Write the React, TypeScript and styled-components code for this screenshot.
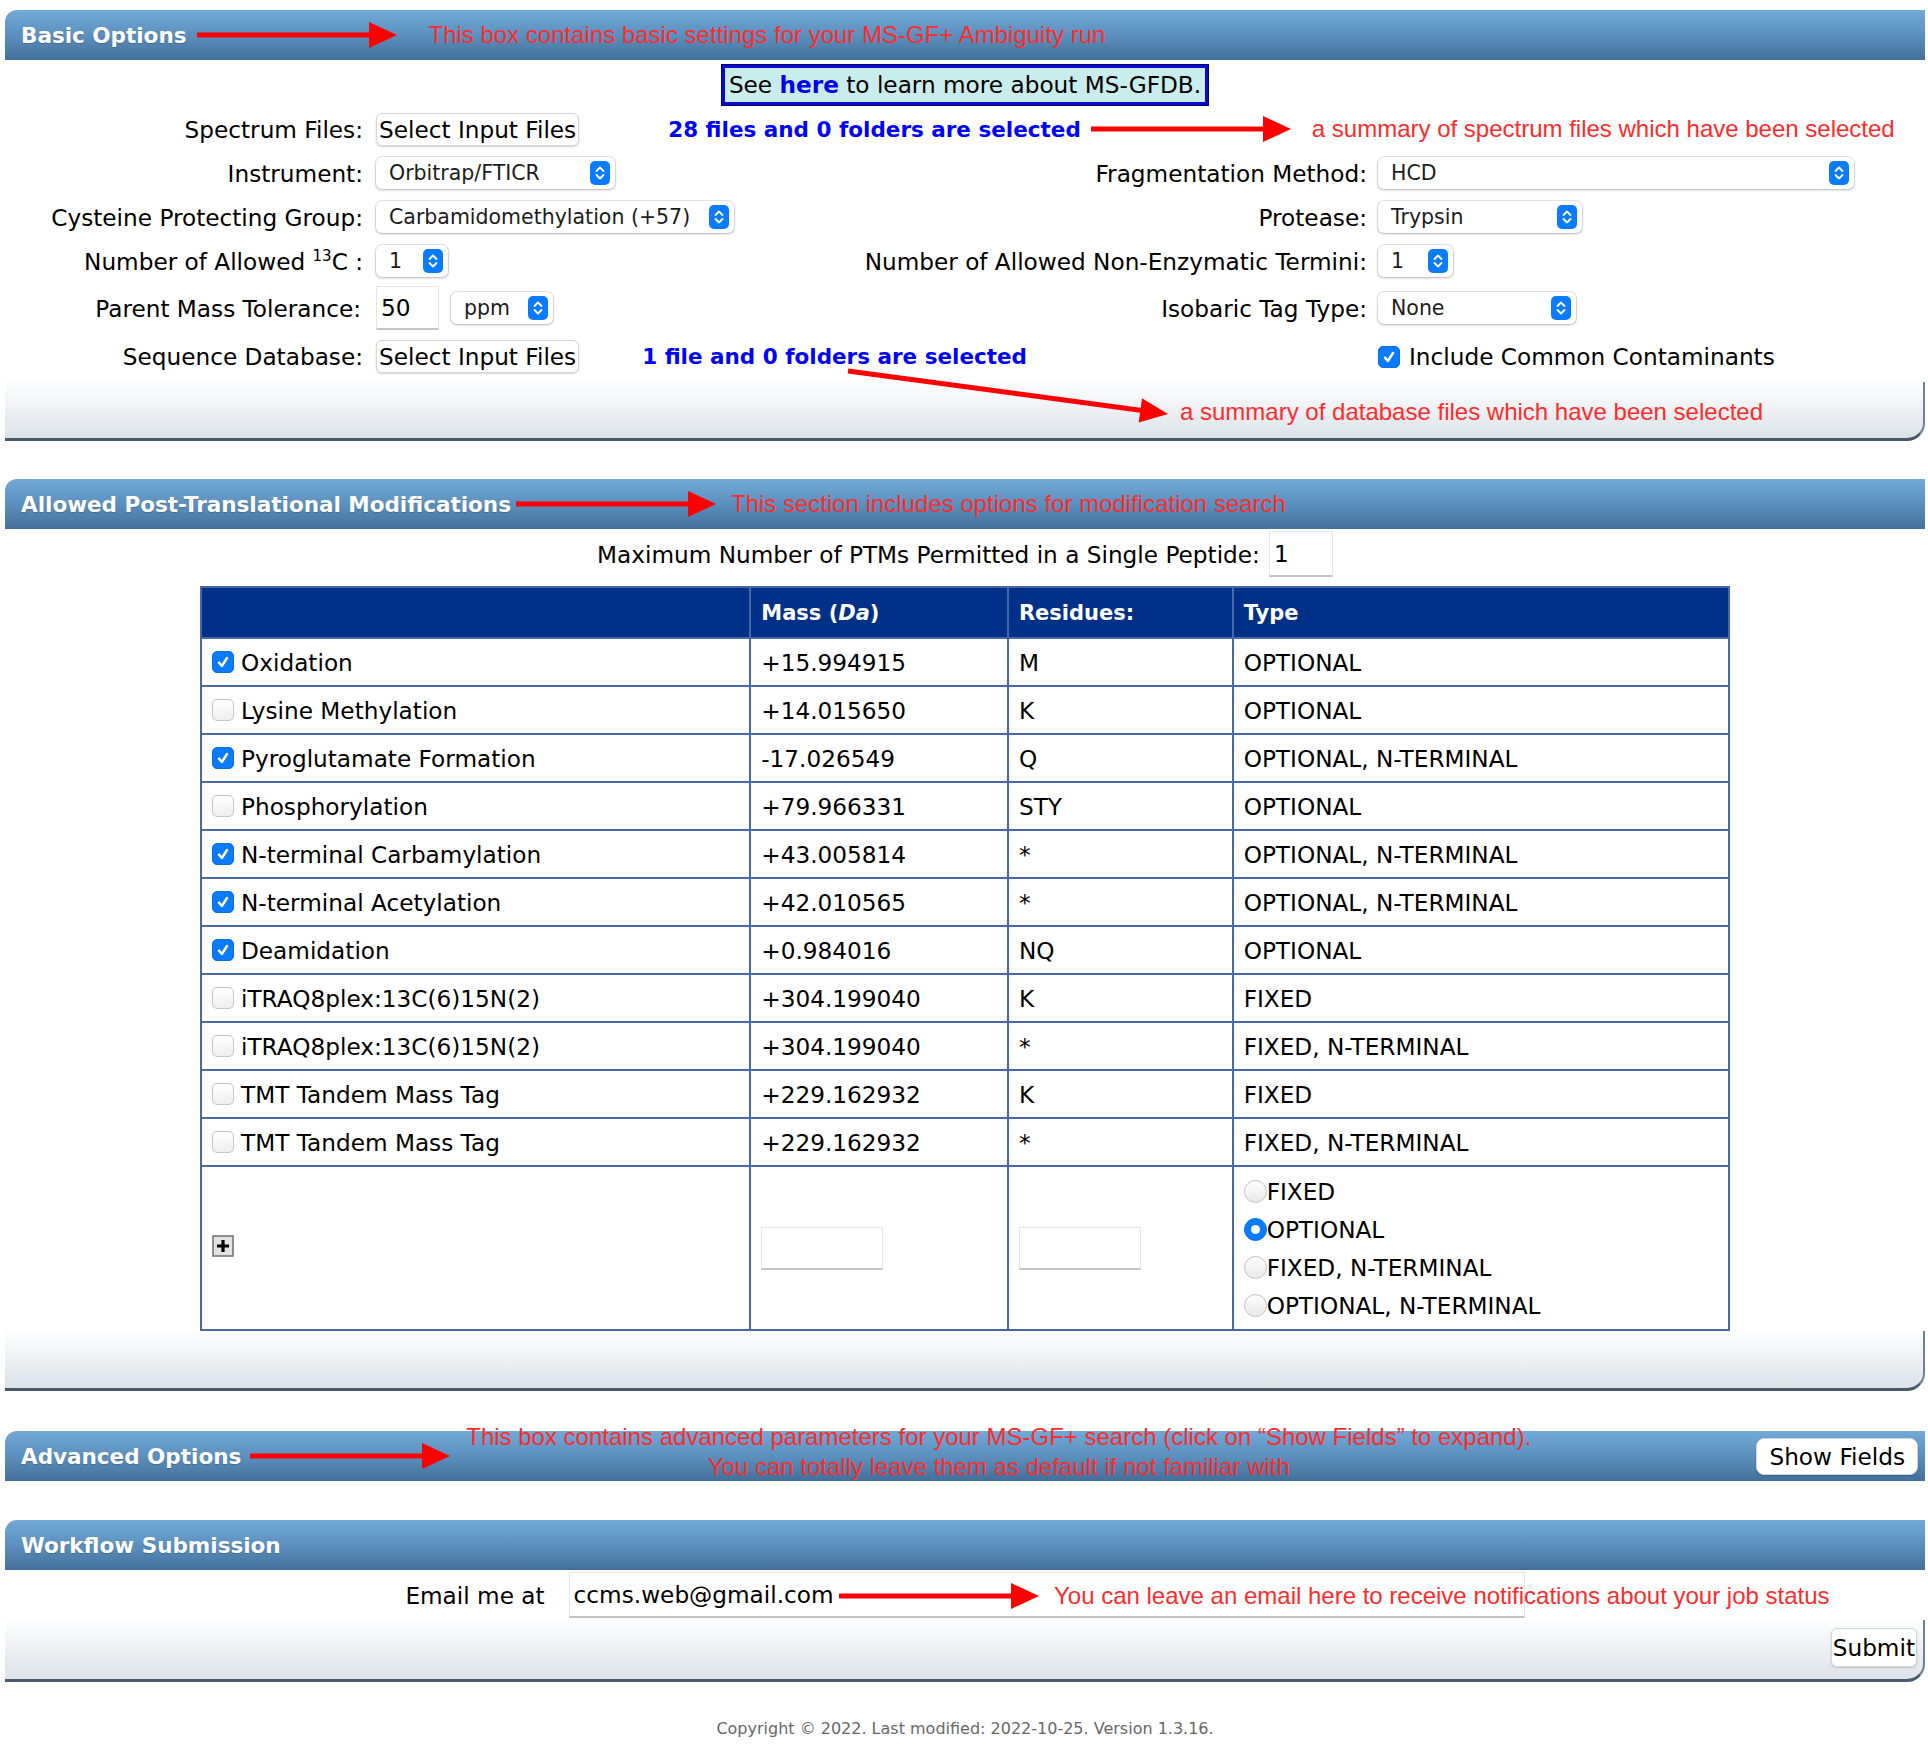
import React from "react";
import styled, { createGlobalStyle } from "styled-components";

const GlobalStyle = createGlobalStyle`
  html, body { margin: 0; padding: 0; background: #fff; }
  body {
    font-family: "DejaVu Sans", Verdana, sans-serif;
    font-size: 23.2px;
    color: #000;
  }
  * { box-sizing: border-box; }
`;

const Page = styled.div`
  padding: 10px 3px 30px 5px;
`;

const Section = styled.section<{ $mb: number }>`
  position: relative;
  margin-bottom: ${(p) => p.$mb}px;
`;

const Header = styled.div`
  display: flex;
  align-items: center;
  height: 50px;
  padding: 0 7px 0 16px;
  border-top-left-radius: 12px;
  background: linear-gradient(to bottom, #72a9d6 0%, #5e93c1 45%, #43709a 100%);
  color: #fff;
`;

const HeaderTitle = styled.h2`
  margin: 0;
  font-family: "DejaVu Sans", Verdana, sans-serif;
  font-size: 21.5px;
  font-weight: bold;
  color: #fff;
  white-space: nowrap;
  text-shadow: 0 1px 1px rgba(0, 0, 0, 0.2);
`;

const Note = styled.span`
  font-family: "Liberation Sans", Arial, sans-serif;
  font-size: 24px;
  line-height: 28px;
  color: #ff2b2b;
  white-space: nowrap;
`;

const CenterNote = styled.div`
  align-self: flex-start;
  margin-top: -9px;
  font-family: "Liberation Sans", Arial, sans-serif;
  font-size: 24px;
  line-height: 30px;
  color: #ff2b2b;
  text-align: center;
  white-space: nowrap;
`;

const ArrowSvg = styled.svg<{ $ml: number; $mr: number }>`
  display: block;
  flex: none;
  margin-left: ${(p) => p.$ml}px;
  margin-right: ${(p) => p.$mr}px;
`;

function Arrow({ ml = 0, mr = 0 }: { ml?: number; mr?: number }) {
  return (
    <ArrowSvg $ml={ml} $mr={mr} width="200" height="30" viewBox="0 0 200 30">
      <line x1="0" y1="15" x2="178" y2="15" stroke="#ff0000" strokeWidth="5" />
      <polygon points="172,2 200,15 172,28" fill="#ff0000" />
    </ArrowSvg>
  );
}

const Overlay = styled.div<{ $left: number; $top: number }>`
  position: absolute;
  left: ${(p) => p.$left}px;
  top: ${(p) => p.$top}px;
  pointer-events: none;
`;

const Footer = styled.div<{ $h: number; $mt?: number }>`
  height: ${(p) => p.$h}px;
  margin-top: ${(p) => p.$mt ?? 0}px;
  display: flex;
  justify-content: flex-end;
  align-items: flex-start;
  padding: 8px 6px 0 0;
  background: linear-gradient(to bottom, #fdfdfe 0%, #eef1f4 50%, #dbe2e9 100%);
  border-right: 2px solid #6f8294;
  border-bottom: 3px solid #47596b;
  border-bottom-right-radius: 18px;
`;

const InfoBox = styled.div`
  width: fit-content;
  margin: 5px auto 2px;
  padding: 2px 4px;
  line-height: 30px;
  background: #c9ecec;
  border: 3px solid #0a0ad2;
  box-shadow: 0 0 0 1px #00006e;
`;

const InfoLink = styled.a`
  color: #0000ee;
  font-weight: bold;
  text-decoration: none;
`;

const FormGrid = styled.div`
  display: grid;
  grid-template-columns: 371px 480px 522px 1fr;
  grid-template-rows: repeat(4, 44px) 50px 47px;
  align-items: center;
`;

const Label = styled.label<{ $pr: number }>`
  text-align: right;
  padding-right: ${(p) => p.$pr}px;
  white-space: nowrap;
`;

const Sup = styled.sup`
  font-size: 15px;
  vertical-align: 9px;
  line-height: 0;
`;

const Controls = styled.div<{ $span?: string }>`
  display: flex;
  align-items: center;
  white-space: nowrap;
  grid-column: ${(p) => p.$span ?? "auto"};
`;

const PlainButton = styled.button<{ $h: number; $px: number; $r: number; $push?: boolean }>`
  font-family: "DejaVu Sans", Verdana, sans-serif;
  font-size: 23.2px;
  color: #000;
  background: #fff;
  height: ${(p) => p.$h}px;
  padding: 0 ${(p) => p.$px}px;
  margin-left: ${(p) => (p.$push ? "auto" : "0")};
  border: 1px solid #d6d6d6;
  border-radius: ${(p) => p.$r}px;
  box-shadow: 0 1px 2px rgba(0, 0, 0, 0.18);
  white-space: nowrap;
  flex: none;
  cursor: pointer;
`;

const Summary = styled.span<{ $ml: number; $mr?: number }>`
  margin-left: ${(p) => p.$ml}px;
  margin-right: ${(p) => p.$mr ?? 0}px;
  color: #0000ff;
  font-weight: bold;
  font-size: 21.5px;
`;

const SelectBox = styled.div<{ $w: number; $ml?: number }>`
  display: inline-flex;
  align-items: center;
  justify-content: space-between;
  width: ${(p) => p.$w}px;
  height: 32px;
  margin-left: ${(p) => p.$ml ?? 0}px;
  padding: 0 5px 0 13px;
  background: #fff;
  border-radius: 6px;
  box-shadow: 0 0 0 1px rgba(0, 0, 0, 0.09), 0 1px 3px rgba(0, 0, 0, 0.22);
  font-size: 20.5px;
  color: #1c1c1c;
  white-space: nowrap;
  flex: none;
`;

function Select({ value, w, ml }: { value: string; w: number; ml?: number }) {
  return (
    <SelectBox $w={w} $ml={ml} role="combobox">
      <span>{value}</span>
      <svg width="20" height="24" viewBox="0 0 20 24">
        <rect x="0" y="0" width="20" height="24" rx="5" fill="#0b7bff" />
        <path d="M6.5 10 L10 6.5 L13.5 10" fill="none" stroke="#fff" strokeWidth="1.8" strokeLinecap="round" strokeLinejoin="round" />
        <path d="M6.5 14 L10 17.5 L13.5 14" fill="none" stroke="#fff" strokeWidth="1.8" strokeLinecap="round" strokeLinejoin="round" />
      </svg>
    </SelectBox>
  );
}

const TextField = styled.input<{ $w: number; $h: number }>`
  width: ${(p) => p.$w}px;
  height: ${(p) => p.$h}px;
  padding: 0 4px;
  font-family: "DejaVu Sans", Verdana, sans-serif;
  font-size: 23.2px;
  color: #000;
  background: #fff;
  border: 1px solid #e6e6e6;
  border-bottom: 2px solid #c4c4c4;
  outline: none;
  flex: none;
`;

const CheckBoxBox = styled.span<{ $checked: boolean }>`
  display: inline-flex;
  align-items: center;
  justify-content: center;
  flex: none;
  width: 22px;
  height: 22px;
  border-radius: 5px;
  background: ${(p) => (p.$checked ? "#0b7bff" : "linear-gradient(#ffffff, #efefef)")};
  border: 1px solid ${(p) => (p.$checked ? "#0a6fe6" : "#c6c6c6")};
`;

function CheckBox({ checked }: { checked: boolean }) {
  return (
    <CheckBoxBox $checked={checked} role="checkbox" aria-checked={checked}>
      {checked && (
        <svg width="16" height="16" viewBox="0 0 16 16">
          <path d="M4 8.6 L6.9 12 L12 4" fill="none" stroke="#fff" strokeWidth="2.4" strokeLinecap="round" strokeLinejoin="round" />
        </svg>
      )}
    </CheckBoxBox>
  );
}

const CheckLabel = styled.span`
  display: flex;
  align-items: center;
  gap: 9px;
  white-space: nowrap;
`;

const CenterRow = styled.div<{ $gap: number; $mt: number; $h: number }>`
  display: flex;
  justify-content: center;
  align-items: center;
  gap: ${(p) => p.$gap}px;
  margin-top: ${(p) => p.$mt}px;
  height: ${(p) => p.$h}px;
  white-space: nowrap;
`;

const PtmTable = styled.table`
  width: 1530px;
  margin: 9px auto 0;
  border-collapse: collapse;
  border: 2px solid #4767a5;
`;

const Th = styled.th<{ $w: number }>`
  width: ${(p) => p.$w}px;
  height: 51px;
  padding: 0 10px;
  background: #003087;
  color: #fff;
  font-size: 21px;
  font-weight: bold;
  text-align: left;
  border: 2px solid #4767a5;
`;

const Td = styled.td<{ $h?: number }>`
  height: ${(p) => p.$h ?? 48}px;
  padding: 0 10px;
  vertical-align: middle;
  border: 2px solid #4767a5;
  white-space: nowrap;
`;

const NameCell = styled.div`
  display: flex;
  align-items: center;
  gap: 7px;
`;

const RadioList = styled.div`
  display: flex;
  flex-direction: column;
`;

const RadioItem = styled.label`
  display: flex;
  align-items: center;
  height: 38px;
`;

const RadioDot = styled.span<{ $on: boolean }>`
  display: inline-flex;
  align-items: center;
  justify-content: center;
  flex: none;
  width: 23px;
  height: 23px;
  border-radius: 50%;
  background: ${(p) => (p.$on ? "#0b7bff" : "linear-gradient(#fdfdfd, #eaeaea)")};
  border: 1px solid ${(p) => (p.$on ? "#0a6fe6" : "#c3c3c3")};
  &::after {
    content: "";
    display: ${(p) => (p.$on ? "block" : "none")};
    width: 9px;
    height: 9px;
    border-radius: 50%;
    background: #fff;
  }
`;

const Copyright = styled.div`
  margin-top: 37px;
  text-align: center;
  font-size: 16px;
  line-height: 20px;
  color: #676767;
`;

const mods: { name: string; mass: string; res: string; type: string; on: boolean }[] = [
  { name: "Oxidation", mass: "+15.994915", res: "M", type: "OPTIONAL", on: true },
  { name: "Lysine Methylation", mass: "+14.015650", res: "K", type: "OPTIONAL", on: false },
  { name: "Pyroglutamate Formation", mass: "-17.026549", res: "Q", type: "OPTIONAL, N-TERMINAL", on: true },
  { name: "Phosphorylation", mass: "+79.966331", res: "STY", type: "OPTIONAL", on: false },
  { name: "N-terminal Carbamylation", mass: "+43.005814", res: "*", type: "OPTIONAL, N-TERMINAL", on: true },
  { name: "N-terminal Acetylation", mass: "+42.010565", res: "*", type: "OPTIONAL, N-TERMINAL", on: true },
  { name: "Deamidation", mass: "+0.984016", res: "NQ", type: "OPTIONAL", on: true },
  { name: "iTRAQ8plex:13C(6)15N(2)", mass: "+304.199040", res: "K", type: "FIXED", on: false },
  { name: "iTRAQ8plex:13C(6)15N(2)", mass: "+304.199040", res: "*", type: "FIXED, N-TERMINAL", on: false },
  { name: "TMT Tandem Mass Tag", mass: "+229.162932", res: "K", type: "FIXED", on: false },
  { name: "TMT Tandem Mass Tag", mass: "+229.162932", res: "*", type: "FIXED, N-TERMINAL", on: false },
];

const radioTypes = ["FIXED", "OPTIONAL", "FIXED, N-TERMINAL", "OPTIONAL, N-TERMINAL"];

function PlusIcon() {
  return (
    <svg width="22" height="22" viewBox="0 0 22 22" aria-label="add">
      <rect x="1" y="1" width="20" height="20" fill="#e2e2e2" stroke="#6e6e6e" strokeWidth="1.5" />
      <path d="M5 11 H17 M11 5 V17" stroke="#000" strokeWidth="3.2" />
    </svg>
  );
}

export default function App() {
  return (
    <Page>
      <GlobalStyle />

      <Section $mb={38}>
        <Header>
          <HeaderTitle>Basic Options</HeaderTitle>
          <Arrow ml={11} mr={31} />
          <Note>This box contains basic settings for your MS-GF+ Ambiguity run</Note>
        </Header>

        <InfoBox>
          See <InfoLink href="#">here</InfoLink> to learn more about MS-GFDB.
        </InfoBox>

        <FormGrid>
          <Label $pr={13}>Spectrum Files:</Label>
          <Controls $span="2 / -1">
            <PlainButton $h={33} $px={2} $r={6}>Select Input Files</PlainButton>
            <Summary $ml={89} $mr={10}>28 files and 0 folders are selected</Summary>
            <Arrow mr={21} />
            <Note>a summary of spectrum files which have been selected</Note>
          </Controls>

          <Label $pr={13}>Instrument:</Label>
          <Controls>
            <Select value="Orbitrap/FTICR" w={239} />
          </Controls>
          <Label $pr={11}>Fragmentation Method:</Label>
          <Controls>
            <Select value="HCD" w={476} />
          </Controls>

          <Label $pr={13}>Cysteine Protecting Group:</Label>
          <Controls>
            <Select value="Carbamidomethylation (+57)" w={358} />
          </Controls>
          <Label $pr={11}>Protease:</Label>
          <Controls>
            <Select value="Trypsin" w={204} />
          </Controls>

          <Label $pr={13}>
            Number of Allowed <Sup>13</Sup>C :
          </Label>
          <Controls>
            <Select value="1" w={72} />
          </Controls>
          <Label $pr={11}>Number of Allowed Non-Enzymatic Termini:</Label>
          <Controls>
            <Select value="1" w={75} />
          </Controls>

          <Label $pr={15}>Parent Mass Tolerance:</Label>
          <Controls>
            <TextField $w={63} $h={44} defaultValue="50" />
            <Select value="ppm" w={102} ml={12} />
          </Controls>
          <Label $pr={11}>Isobaric Tag Type:</Label>
          <Controls>
            <Select value="None" w={198} />
          </Controls>

          <Label $pr={13}>Sequence Database:</Label>
          <Controls $span="2 / 4">
            <PlainButton $h={33} $px={2} $r={6}>Select Input Files</PlainButton>
            <Summary $ml={63}>1 file and 0 folders are selected</Summary>
          </Controls>
          <Controls>
            <CheckLabel>
              <CheckBox checked />
              Include Common Contaminants
            </CheckLabel>
          </Controls>
        </FormGrid>

        <Footer $h={59} $mt={2} />

        <Overlay $left={841} $top={353}>
          <svg width="330" height="64" viewBox="0 0 330 64">
            <line x1="2" y1="8" x2="296" y2="47.5" stroke="#ff0000" strokeWidth="5" />
            <polygon points="322,51 292.7,59.5 296,35.2" fill="#ff0000" />
          </svg>
        </Overlay>
        <Overlay $left={1175} $top={388}>
          <Note>a summary of database files which have been selected</Note>
        </Overlay>
      </Section>

      <Section $mb={40}>
        <Header>
          <HeaderTitle>Allowed Post-Translational Modifications</HeaderTitle>
          <Arrow ml={5} mr={15} />
          <Note>This section includes options for modification search</Note>
        </Header>

        <CenterRow $gap={9} $mt={2} $h={46}>
          <span>Maximum Number of PTMs Permitted in a Single Peptide:</span>
          <TextField $w={64} $h={46} defaultValue="1" />
        </CenterRow>

        <PtmTable>
          <thead>
            <tr>
              <Th $w={550}></Th>
              <Th $w={258}>
                Mass (<i>Da</i>)
              </Th>
              <Th $w={225}>Residues:</Th>
              <Th $w={497}>Type</Th>
            </tr>
          </thead>
          <tbody>
            {mods.map((m, i) => (
              <tr key={i}>
                <Td>
                  <NameCell>
                    <CheckBox checked={m.on} />
                    {m.name}
                  </NameCell>
                </Td>
                <Td>{m.mass}</Td>
                <Td>{m.res}</Td>
                <Td>{m.type}</Td>
              </tr>
            ))}
            <tr>
              <Td $h={164}>
                <PlusIcon />
              </Td>
              <Td $h={164}>
                <TextField $w={122} $h={43} />
              </Td>
              <Td $h={164}>
                <TextField $w={122} $h={43} />
              </Td>
              <Td $h={164}>
                <RadioList>
                  {radioTypes.map((t) => (
                    <RadioItem key={t}>
                      <RadioDot $on={t === "OPTIONAL"} />
                      {t}
                    </RadioItem>
                  ))}
                </RadioList>
              </Td>
            </tr>
          </tbody>
        </PtmTable>

        <Footer $h={60} />
      </Section>

      <Section $mb={39}>
        <Header>
          <HeaderTitle>Advanced Options</HeaderTitle>
          <Arrow ml={9} mr={16} />
          <CenterNote>
            This box contains advanced parameters for your MS-GF+ search (click on “Show Fields” to expand).
            <br />
            You can totally leave them as default if not familiar with
          </CenterNote>
          <PlainButton $h={37} $px={12} $r={8} $push>
            Show Fields
          </PlainButton>
        </Header>
      </Section>

      <Section $mb={0}>
        <Header>
          <HeaderTitle>Workflow Submission</HeaderTitle>
        </Header>

        <CenterRow $gap={24} $mt={2} $h={46}>
          <span>Email me at</span>
          <TextField $w={956} $h={46} defaultValue="ccms.web@gmail.com" />
        </CenterRow>

        <Footer $h={62} $mt={2}>
          <PlainButton $h={39} $px={1} $r={6}>Submit</PlainButton>
        </Footer>

        <Overlay $left={834} $top={61}>
          <Arrow />
        </Overlay>
        <Overlay $left={1049} $top={62}>
          <Note>You can leave an email here to receive notifications about your job status</Note>
        </Overlay>
      </Section>

      <Copyright>Copyright © 2022. Last modified: 2022-10-25. Version 1.3.16.</Copyright>
    </Page>
  );
}
